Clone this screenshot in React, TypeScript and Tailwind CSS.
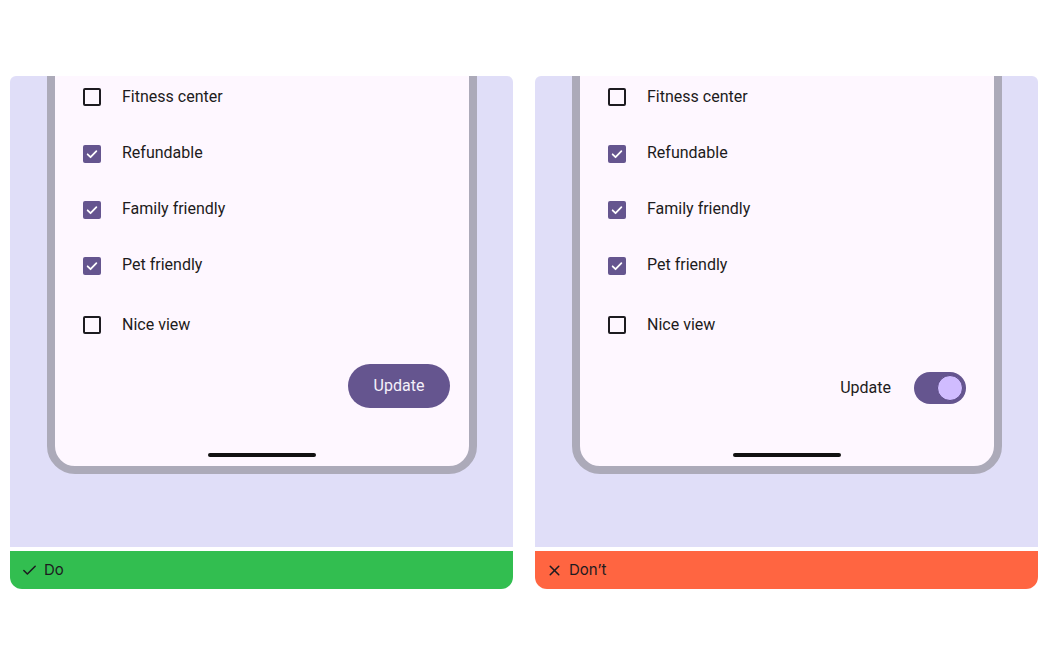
import { Check, X } from "lucide-react";

type Item = { label: string; checked: boolean };

const items: Item[] = [
  { label: "Fitness center", checked: false },
  { label: "Refundable", checked: true },
  { label: "Family friendly", checked: true },
  { label: "Pet friendly", checked: true },
];

function Box({ checked }: { checked: boolean }) {
  if (checked) {
    return (
      <span className="mt-[2px] flex h-[18px] w-[18px] items-center justify-center rounded-[2px] bg-[#65558F]">
        <svg width="14" height="14" viewBox="0 0 24 24" fill="none">
          <path d="M4.5 12.5l5 5L19.5 7" stroke="#fff" strokeWidth="3" strokeLinecap="round" strokeLinejoin="round" />
        </svg>
      </span>
    );
  }
  return <span className="h-[18px] w-[18px] rounded-[2px] border-2 border-[#1D1B20]" />;
}

function Row({ label, checked, className = "" }: Item & { className?: string }) {
  return (
    <div className={`flex h-[56px] items-center pl-[28px] ${className}`}>
      <Box checked={checked} />
      <span className="ml-[21px] text-[16px] text-[#1D1B20]">{label}</span>
    </div>
  );
}

function Phone({ variant }: { variant: "do" | "dont" }) {
  return (
    <div className="-mt-[22px] ml-[37px] flex h-[420px] w-[430px] flex-col rounded-b-[28px] border-[8px] border-[#ACAAB9] bg-[#FEF7FF] font-['Roboto',sans-serif]">
      <div className="pt-[7px]">
        {items.map((it) => (
          <Row key={it.label} {...it} />
        ))}
        <Row label="Nice view" checked={false} className="mt-[4px]" />
      </div>
      {variant === "do" ? (
        <div className="mt-[11px] flex justify-end pr-[19px]">
          <button className="flex h-[44px] w-[102px] items-center justify-center rounded-full bg-[#65558F] text-[16px] text-[#F4EFFA]">
            Update
          </button>
        </div>
      ) : (
        <div className="mt-[19px] flex items-center justify-end pr-[28px]">
          <span className="text-[16px] text-[#1D1B20]">Update</span>
          <span className="ml-[23px] flex h-[32px] w-[52px] items-center justify-end rounded-full bg-[#65558F] pr-[3px]">
            <span className="h-[26px] w-[26px] rounded-full border border-[#5a4a85] bg-[#D0BCFF]" />
          </span>
        </div>
      )}
      <div className={`${variant === "do" ? "mt-[45px]" : "mt-[49px]"} flex justify-center`}>
        <span className="h-[4px] w-[108px] rounded-full bg-[#111]" />
      </div>
    </div>
  );
}

function Panel({ variant }: { variant: "do" | "dont" }) {
  const isDo = variant === "do";
  return (
    <div className="flex w-[503px] flex-col">
      <div className="h-[471px] overflow-hidden rounded-t-[6px] bg-[#E0DEF8]">
        <Phone variant={variant} />
      </div>
      <div
        className={`mt-[4px] flex h-[38px] items-center gap-[6px] rounded-b-[12px] pl-[11px] font-['Inter',sans-serif] text-[15px] text-[#1D1B20] ${
          isDo ? "bg-[#32BE50]" : "bg-[#FF6541]"
        }`}
      >
        {isDo ? <Check size={17} strokeWidth={2.2} /> : <X size={17} strokeWidth={2.2} />}
        <span>{isDo ? "Do" : "Don’t"}</span>
      </div>
    </div>
  );
}

export default function App() {
  return (
    <div className="h-[668px] w-[1054px] bg-white pt-[76px] pl-[10px]">
      <div className="flex gap-[22px]">
        <Panel variant="do" />
        <Panel variant="dont" />
      </div>
    </div>
  );
}
